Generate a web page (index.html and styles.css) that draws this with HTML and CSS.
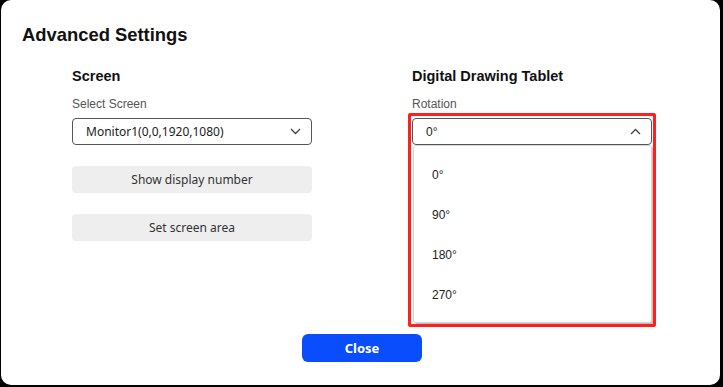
FILE: index.html
```html
<!DOCTYPE html>
<html lang="en">
<head>
    <meta charset="UTF-8">
    <meta name="viewport" content="width=device-width, initial-scale=1.0">
    <title>Advanced Settings</title>
    <link rel="stylesheet" href="styles.css">
</head>
<body>
    <div class="dialog">
        <h1 class="title">Advanced Settings</h1>
        <div class="columns">
            <div class="col">
                <h2 class="col-title">Screen</h2>
                <label class="field-label">Select Screen</label>
                <div class="select">
                    <span class="select-value">Monitor1(0,0,1920,1080)</span>
                    <svg class="chevron" width="11" height="7" viewBox="0 0 11 7"><path d="M1 1 L5.5 5.5 L10 1" fill="none" stroke="#444" stroke-width="1.3"/></svg>
                </div>
                <button class="btn-gray">Show display number</button>
                <button class="btn-gray">Set screen area</button>
            </div>
            <div class="col">
                <h2 class="col-title">Digital Drawing Tablet</h2>
                <label class="field-label">Rotation</label>
                <div class="select-wrap">
                    <div class="select">
                        <span class="select-value plain">0°</span>
                        <svg class="chevron" width="11" height="7" viewBox="0 0 11 7"><path d="M1 6 L5.5 1.5 L10 6" fill="none" stroke="#444" stroke-width="1.3"/></svg>
                    </div>
                    <ul class="menu">
                        <li>0°</li>
                        <li>90°</li>
                        <li>180°</li>
                        <li>270°</li>
                    </ul>
                    <div class="highlight"></div>
                </div>
            </div>
        </div>
        <div class="footer">
            <button class="btn-primary">Close</button>
        </div>
    </div>
</body>
</html>
```

FILE: styles.css
```css
body {
    margin: 0;
    background: #000;
    font-family: 'Liberation Sans', Arial, sans-serif;
    width: 723px;
    height: 387px;
    overflow: hidden;
}
.dialog {
    width: 719px;
    height: 385px;
    margin-left: 1px;
    background: #fff;
    border-radius: 10px;
    box-sizing: border-box;
    padding: 24px 0 23px 21px;
    display: flex;
    flex-direction: column;
}
.title {
    margin: 0;
    font-size: 18.4px;
    line-height: 22px;
    font-weight: bold;
    color: #111;
}
.columns {
    display: grid;
    grid-template-columns: 240px 240px;
    column-gap: 100px;
    margin: 22px 0 0 50px;
}
.col {
    display: flex;
    flex-direction: column;
}
.col-title {
    margin: 0;
    font-size: 14.5px;
    line-height: 16px;
    font-weight: bold;
    color: #111;
}
.field-label {
    margin-top: 13px;
    font-size: 12px;
    line-height: 15px;
    color: #555;
}
.select {
    margin-top: 6px;
    height: 27px;
    box-sizing: border-box;
    border: 1px solid #555;
    border-radius: 4px;
    display: flex;
    align-items: center;
    justify-content: space-between;
    padding: 0 10px 0 13px;
    background: #fff;
}
.select-value {
    font-family: 'Noto Sans', sans-serif;
    font-size: 12px;
    color: #222;
}
.select-value.plain {
    font-family: 'Liberation Sans', Arial, sans-serif;
}
.btn-gray {
    margin-top: 21px;
    height: 27px;
    border: none;
    border-radius: 4px;
    background: #eeeeee;
    font-family: 'Noto Sans', sans-serif;
    font-size: 12px;
    color: #333;
    padding: 0;
}
.select-wrap {
    position: relative;
}
.menu {
    position: absolute;
    top: 33px;
    left: 1px;
    width: 239px;
    margin: 0;
    padding: 9px 0;
    list-style: none;
    background: #fff;
    border: 1px solid #d6d6d6;
    border-radius: 3px;
    box-shadow: 2px 2px 1px rgba(0, 0, 0, 0.25);
    box-sizing: border-box;
    height: 178px;
}
.menu li {
    height: 40px;
    line-height: 40px;
    padding-left: 18px;
    font-size: 12px;
    color: #222;
}
.highlight {
    position: absolute;
    top: 1px;
    left: -4px;
    width: 248px;
    height: 214px;
    box-sizing: border-box;
    border: 3px solid #ff1f1f;
    border-radius: 2px;
    pointer-events: none;
}
.footer {
    margin-top: auto;
    display: flex;
    justify-content: center;
    padding-right: 18px;
}
.btn-primary {
    width: 120px;
    height: 28px;
    border: none;
    border-radius: 6px;
    background: #0a4dfc;
    color: #fff;
    font-family: 'Noto Sans', sans-serif;
    font-size: 13px;
    font-weight: bold;
    padding: 0;
}
```
